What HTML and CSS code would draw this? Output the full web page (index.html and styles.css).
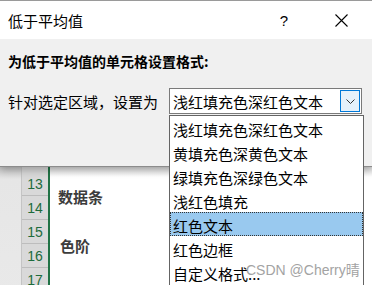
FILE: index.html
```html
<!DOCTYPE html>
<html lang="zh-CN">
<head>
    <meta charset="UTF-8">
    <title>低于平均值</title>
    <link rel="stylesheet" href="styles.css">
</head>
<body>
    <div class="screen">
        <div class="dialog">
            <div class="titlebar">
                <span class="title">低于平均值</span>
                <span class="help">?</span>
                <span class="close">
                    <svg width="13" height="13" viewBox="0 0 13 13"><path d="M0.5 0.5 L12.5 12.5 M12.5 0.5 L0.5 12.5" stroke="#000" stroke-width="1.1" fill="none"/></svg>
                </span>
            </div>
            <div class="content">
                <div class="heading">为低于平均值的单元格设置格式:</div>
                <div class="field">
                    <span class="label">针对选定区域，设置为</span>
                    <div class="combo">
                        <span class="combo-text">浅红填充色深红色文本</span>
                        <span class="combo-btn">
                            <svg width="9" height="5" viewBox="0 0 9 5"><path d="M0.5 0.5 L4.5 4.5 L8.5 0.5" stroke="#333" stroke-width="1" fill="none"/></svg>
                        </span>
                    </div>
                </div>
            </div>
        </div>

        <!-- worksheet behind the dialog -->
        <div class="sheet">
            <div class="gutter"></div>
            <div class="rownums">
                <div class="rownum">13</div>
                <div class="rownum">14</div>
                <div class="rownum">15</div>
                <div class="rownum">16</div>
                <div class="rownum">17</div>
            </div>
            <div class="cells">
                <div class="cell-label bar">数据条</div>
                <div class="cell-label scale">色阶</div>
            </div>
        </div>

        <!-- open dropdown list -->
        <ul class="droplist">
            <li>浅红填充色深红色文本</li>
            <li>黄填充色深黄色文本</li>
            <li>绿填充色深绿色文本</li>
            <li>浅红色填充</li>
            <li class="selected">红色文本</li>
            <li>红色边框</li>
            <li>自定义格式...</li>
        </ul>

        <div class="watermark">CSDN @Cherry晴</div>
    </div>
</body>
</html>
```

FILE: styles.css
```css
/* Basic reset */
* {
    margin: 0;
    padding: 0;
    box-sizing: border-box;
}
body {
    font-family: "Noto Sans CJK SC", "Noto Sans", sans-serif;
    color: #000;
    background-color: #fff;
}

.screen {
    position: relative;
    width: 372px;
    height: 285px;
    overflow: hidden;
    border-top: 1px solid #9a9a9a;
}

/* Dialog */
.dialog {
    position: relative;
    z-index: 1;
    border-bottom: 1px solid #8c8c8c;
    box-shadow: 0 3px 8px rgba(0, 0, 0, 0.28);
}
.titlebar {
    display: flex;
    align-items: center;
    height: 38px;
    padding-left: 8px;
    background-color: #fff;
}
.title {
    font-size: 15px;
}
.help {
    margin-left: auto;
    font-family: "Liberation Sans", sans-serif;
    font-size: 15px;
}
.close {
    display: flex;
    margin-left: 47px;
    margin-right: 24px;
}
.content {
    height: 127px;
    padding: 12px 8px 0 8px;
    background-color: #f0f0f0;
}
.heading {
    font-size: 14px;
    font-weight: bold;
    line-height: 20px;
}
.field {
    display: flex;
    align-items: center;
    margin-top: 17px;
}
.label {
    width: 161px;
    font-size: 15px;
}
.combo {
    display: flex;
    align-items: center;
    width: 193px;
    height: 26px;
    border: 1px solid #7a7a7a;
    background-color: #fff;
}
.combo-text {
    padding-left: 3px;
    font-size: 15px;
}
.combo-btn {
    display: flex;
    align-items: center;
    justify-content: center;
    width: 20px;
    height: 22px;
    margin-left: auto;
    margin-right: 1px;
    border: 1px solid #0078d7;
    background-color: #e5f1fb;
}

/* Worksheet */
.sheet {
    display: flex;
    height: 130px;
}
.gutter {
    width: 21px;
    background: linear-gradient(#c8c8c8, #e6e6e6 12px, #e9e9e9);
}
.rownums {
    width: 29px;
    padding-top: 5px;
    background-color: #d9d9d9;
    border-left: 1px solid #c4c4c4;
    border-right: 2px solid #217346;
}
.rownum {
    height: 24px;
    border-bottom: 1px solid #bdbdbd;
    font-family: "Liberation Sans", sans-serif;
    font-size: 14px;
    line-height: 24px;
    color: #1d6b3c;
    text-align: center;
}
.cells {
    flex: 1;
    display: flex;
    flex-direction: column;
    padding-left: 8px;
    background: linear-gradient(#dcdcdc, #fff 10px);
}
.cell-label {
    font-size: 15px;
    font-weight: bold;
    color: #3c3c3c;
}
.bar {
    margin-top: 19px;
}
.scale {
    margin-top: 28px;
    margin-left: 2px;
}

/* Dropdown list */
.droplist {
    position: absolute;
    z-index: 2;
    left: 169px;
    top: 114px;
    width: 195px;
    height: 190px;
    list-style: none;
    background-color: #fff;
    border: 1px solid #646464;
}
.droplist li {
    height: 24px;
    padding-left: 2px;
    font-size: 15px;
    line-height: 26px;
    border: 1px dotted transparent;
}
.droplist li.selected {
    background-color: #99c9ef;
    border-color: #333;
}

.watermark {
    position: absolute;
    z-index: 3;
    left: 246px;
    top: 258px;
    font-family: "Liberation Sans", "Noto Sans CJK SC", sans-serif;
    font-size: 14px;
    color: #a3a3a3;
}
```
